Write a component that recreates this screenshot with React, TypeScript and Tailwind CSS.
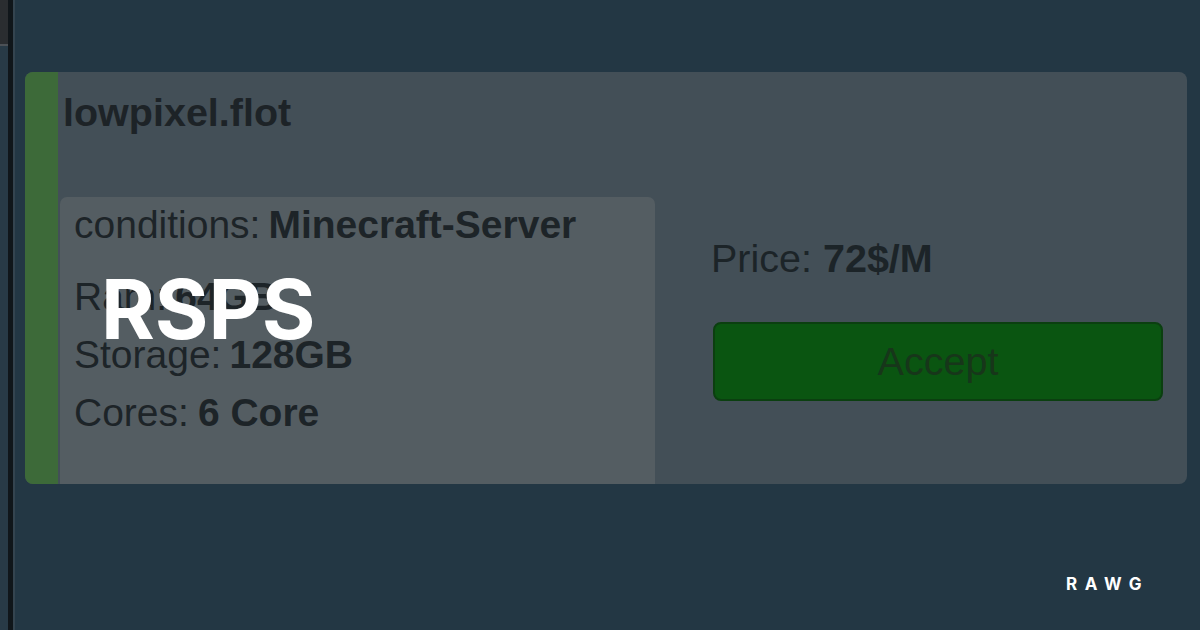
export default function App() {
  return (
    <div className="relative flex h-[630px] w-[1200px] overflow-hidden bg-[#233744] font-['Liberation_Sans',Arial,sans-serif]">
      {/* left edge of the captured window */}
      <div className="flex h-full w-[16px] shrink-0">
        <div className="flex w-[8px] flex-col">
          <div className="h-[46px] border-b-2 border-[#4c5156] bg-[#2a2d30]" />
          <div className="flex-1 bg-[#283a46]" />
        </div>
        <div className="w-[5px] bg-[#10161a]" />
        <div className="w-[2px] bg-[#34444f]" />
      </div>

      {/* offer card */}
      <div className="flex-1 pl-[9px] pr-[13px] pt-[72px]">
        <div className="flex h-[412px] rounded-[8px] bg-[#434f57]">
          <div className="w-[33px] shrink-0 rounded-l-[8px] bg-[#3d6a39]" />
          <div className="flex flex-1 flex-col">
            <div className="h-[125px] pl-[5px] pt-[18px]">
              <h2 className="text-[39.5px] font-bold leading-[44px] text-[#1d2327]">lowpixel.flot</h2>
            </div>
            <div className="flex flex-1">
              <div className="ml-[2px] w-[595px] rounded-t-[7px] bg-[#545d62] pl-[14px] pt-[6px] text-[39px] leading-[44px] text-[#1d2428]">
                <p>
                  conditions:<span className="ml-[8px] font-bold">Minecraft-Server</span>
                </p>
                <p className="mt-[28px]">
                  Ram:<span className="ml-[8px] font-bold">64GB</span>
                </p>
                <p className="mt-[14px]">
                  Storage:<span className="ml-[8px] font-bold">128GB</span>
                </p>
                <p className="mt-[14px]">
                  Cores:<span className="ml-[9px] font-bold">6 Core</span>
                </p>
              </div>
              <div className="flex flex-1 flex-col pl-[56px] pr-[24px] pt-[39px]">
                <p className="text-[39.5px] leading-[44px] text-[#1c2428]">
                  Price: <span className="font-bold">72$/M</span>
                </p>
                <button className="ml-[2px] mt-[42px] flex h-[79px] items-center justify-center rounded-[8px] border-2 border-[#0b3f10] bg-[#0a5511] text-[39.5px] text-[#17361a]">
                  Accept
                </button>
              </div>
            </div>
          </div>
        </div>
      </div>

      {/* overlay title and brand */}
      <div className="absolute left-[101px] top-[269px] font-['Inter',sans-serif] text-[82px] font-bold leading-none text-white">
        RSPS
      </div>
      <div className="absolute left-[1066px] top-[576px] font-['Inter',sans-serif] text-[17px] font-bold leading-none tracking-[0.45em] text-white">
        RAWG
      </div>
    </div>
  );
}
